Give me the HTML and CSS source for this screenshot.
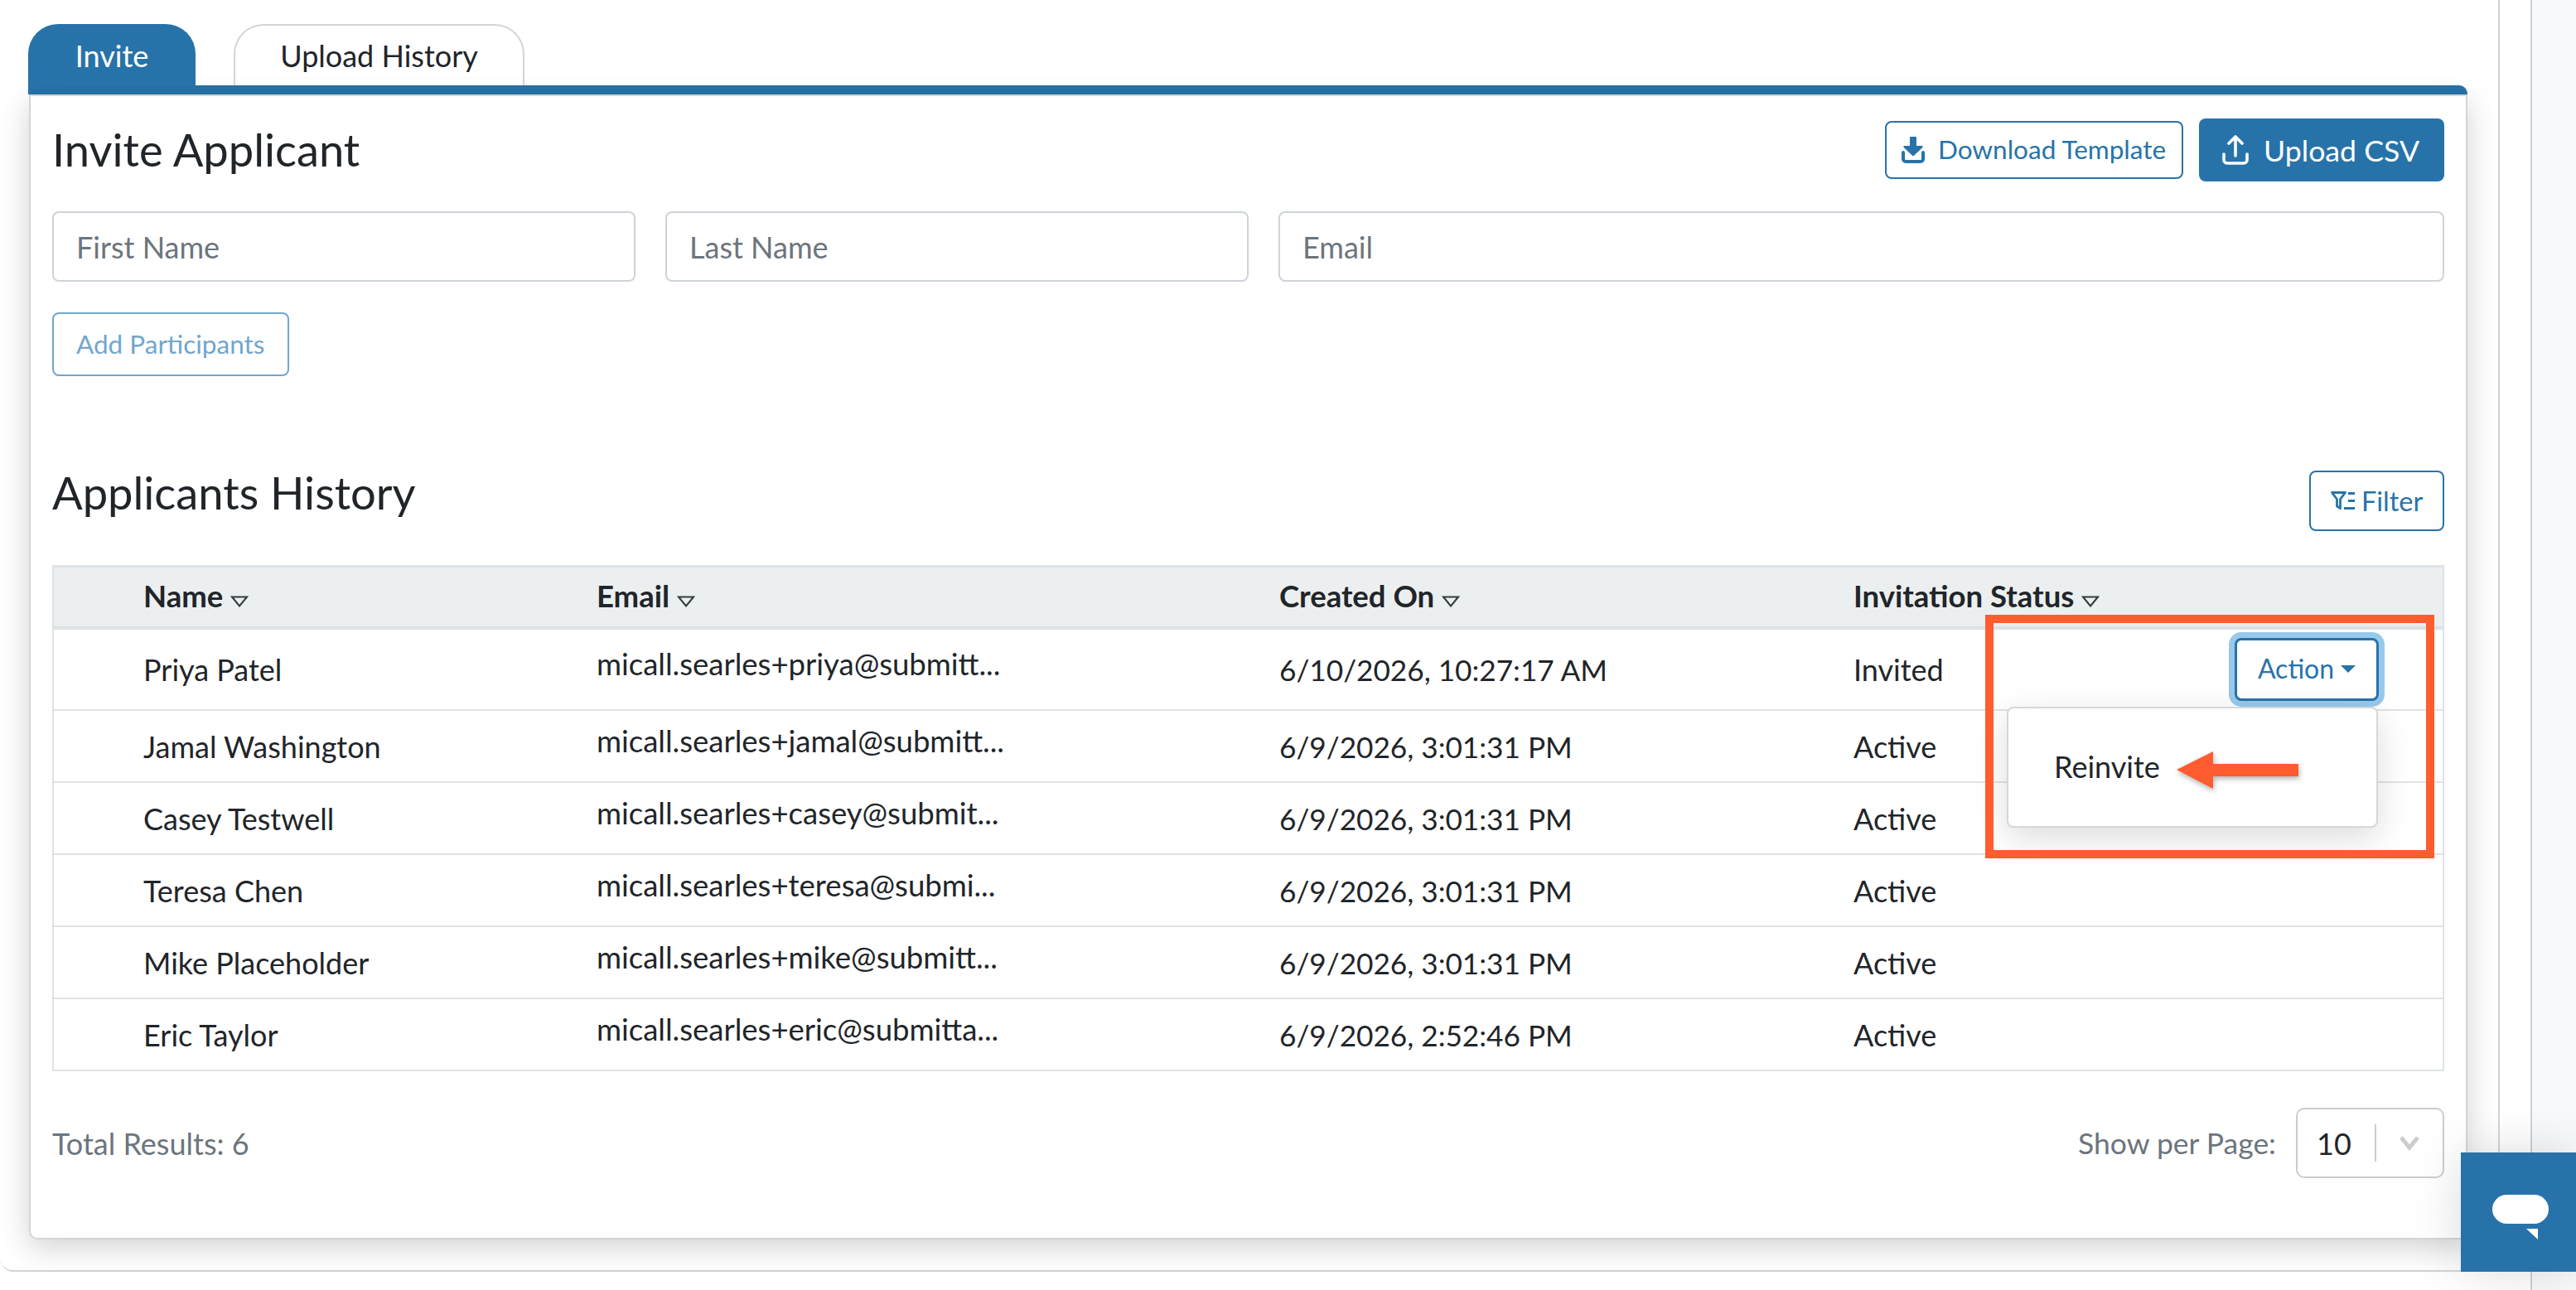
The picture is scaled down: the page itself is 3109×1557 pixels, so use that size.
FILE: index.html
```html
<!DOCTYPE html>
<html lang="en">
<head>
    <meta charset="UTF-8">
    <meta name="viewport" content="width=device-width, initial-scale=1.0">
    <title>Invite Applicant</title>
    <link rel="stylesheet" href="styles.css">
</head>
<body>
    <div class="page">
        <main class="panel">
            <!-- Tabs -->
            <nav class="tabs">
                <a class="tab tab-active" href="#">Invite</a>
                <a class="tab" href="#">Upload History</a>
            </nav>
            <div class="tab-bar"></div>

            <section class="card">
                <div class="card-head">
                    <h1>Invite Applicant</h1>
                    <div class="head-actions">
                        <button class="btn btn-outline btn-download">
                            <svg class="icon-download" viewBox="0 0 28 32"><path d="M11 0h6a1 1 0 0 1 1 1v10h6.500c1 0 1.500 1.200.8 1.900L14.800 23a1 1 0 0 1-1.500 0L2.700 12.900c-.7-.7-.2-1.900.8-1.900H10V1a1 1 0 0 1 1-1z" fill="currentColor"/><path d="M2 19v8a3 3 0 0 0 3 3h18a3 3 0 0 0 3-3v-8" fill="none" stroke="currentColor" stroke-width="4" stroke-linecap="round"/></svg>
                            <span class="btn-label">Download Template</span>
                        </button>
                        <button class="btn btn-solid">
                            <svg class="icon-upload" viewBox="0 0 32 36"><path d="M16 25V3M8 10l8-8 8 8" fill="none" stroke="currentColor" stroke-width="3.600" stroke-linecap="round" stroke-linejoin="round"/><path d="M2 23v7a4 4 0 0 0 4 4h20a4 4 0 0 0 4-4v-7" fill="none" stroke="currentColor" stroke-width="3.600" stroke-linecap="round"/></svg>
                            Upload CSV
                        </button>
                    </div>
                </div>

                <form class="invite-form">
                    <input class="field field-name" type="text" placeholder="First Name">
                    <input class="field field-name" type="text" placeholder="Last Name">
                    <input class="field field-email" type="text" placeholder="Email">
                </form>
                <button class="btn btn-add">Add Participants</button>

                <div class="history-head">
                    <h2>Applicants History</h2>
                    <button class="btn btn-outline btn-filter">
                        <svg class="icon-filter" viewBox="0 0 30 23"><path d="M1.500 1.500h16l-6 8v11l-4-2.500v-8.500z" fill="none" stroke="currentColor" stroke-width="2.800" stroke-linejoin="round"/><path d="M21 2.500h8M21 11.500h8M16 20.500h13" fill="none" stroke="currentColor" stroke-width="3"/></svg>
                        Filter
                    </button>
                </div>

                <table class="applicants">
                    <thead>
                        <tr>
                            <th class="col-pad"></th>
                            <th class="col-name">Name <svg class="sort" viewBox="0 0 22 14"><path d="M2 1.500h18l-9 11z" fill="none" stroke="currentColor" stroke-width="2"/></svg></th>
                            <th class="col-email">Email <svg class="sort" viewBox="0 0 22 14"><path d="M2 1.500h18l-9 11z" fill="none" stroke="currentColor" stroke-width="2"/></svg></th>
                            <th class="col-date">Created On <svg class="sort" viewBox="0 0 22 14"><path d="M2 1.500h18l-9 11z" fill="none" stroke="currentColor" stroke-width="2"/></svg></th>
                            <th>Invitation Status <svg class="sort" viewBox="0 0 22 14"><path d="M2 1.500h18l-9 11z" fill="none" stroke="currentColor" stroke-width="2"/></svg></th>
                        </tr>
                    </thead>
                    <tbody>
                        <tr class="row-first">
                            <td></td>
                            <td>Priya Patel</td>
                            <td><span class="email">micall.searles+priya@submitt...</span></td>
                            <td class="date">6/10/2026, 10:27:17 AM</td>
                            <td class="status-cell">
                                Invited
                                <button class="btn-action">Action<span class="caret"></span></button>
                                <div class="menu"><span class="menu-item">Reinvite</span></div>
                            </td>
                        </tr>
                        <tr>
                            <td></td>
                            <td>Jamal Washington</td>
                            <td><span class="email">micall.searles+jamal@submitt...</span></td>
                            <td class="date">6/9/2026, 3:01:31 PM</td>
                            <td>Active</td>
                        </tr>
                        <tr>
                            <td></td>
                            <td>Casey Testwell</td>
                            <td><span class="email">micall.searles+casey@submit...</span></td>
                            <td class="date">6/9/2026, 3:01:31 PM</td>
                            <td>Active</td>
                        </tr>
                        <tr>
                            <td></td>
                            <td>Teresa Chen</td>
                            <td><span class="email">micall.searles+teresa@submi...</span></td>
                            <td class="date">6/9/2026, 3:01:31 PM</td>
                            <td>Active</td>
                        </tr>
                        <tr>
                            <td></td>
                            <td>Mike Placeholder</td>
                            <td><span class="email">micall.searles+mike@submitt...</span></td>
                            <td class="date">6/9/2026, 3:01:31 PM</td>
                            <td>Active</td>
                        </tr>
                        <tr>
                            <td></td>
                            <td>Eric Taylor</td>
                            <td><span class="email">micall.searles+eric@submitta...</span></td>
                            <td class="date">6/9/2026, 2:52:46 PM</td>
                            <td>Active</td>
                        </tr>
                    </tbody>
                </table>

                <div class="table-foot">
                    <span class="muted">Total Results: 6</span>
                    <div class="per-page">
                        <span class="muted per-label">Show per Page:</span>
                        <div class="select">
                            <span class="select-value">10</span>
                            <span class="select-arrow">
                                <svg class="chevron" viewBox="0 0 26 20"><path d="M3 3l10 12L23 3" fill="none" stroke="currentColor" stroke-width="5"/></svg>
                            </span>
                        </div>
                    </div>
                </div>
            </section>
        </main>
        <div class="gutter"></div>
        <aside class="side"></aside>
    </div>

    <!-- Screenshot annotation -->
    <div class="callout"></div>
    <svg class="callout-arrow" viewBox="0 0 147 45"><path d="M0 22L44 0v15h103v15H44v15z" fill="#ff5c30"/></svg>

    <!-- Chat launcher -->
    <div class="chat">
        <span class="chat-bubble"></span>
        <svg class="chat-tail" viewBox="0 0 14 13"><path d="M0 0h14v13z" fill="#fff"/></svg>
    </div>
</body>
</html>
```

FILE: styles.css
```css
* {
    box-sizing: border-box;
}

html, body {
    height: 100%;
}

body {
    margin: 0;
    overflow: hidden;
    position: relative;
    font-family: Lato, "Liberation Sans", sans-serif;
    font-size: 36px;
    color: #212529;
    background-color: #fff;
}

.page {
    display: flex;
    height: 100%;
    align-items: flex-start;
}

.panel {
    flex: 0 0 3017px;
    height: 1535px;
    border-right: 2px solid #d2d4d6;
    border-bottom: 2px solid #d2d4d6;
    border-bottom-left-radius: 16px;
    padding-top: 29px;
    background-color: #fff;
}

.gutter {
    flex: 0 0 37px;
}

.side {
    flex: 1;
    height: 100%;
    border-left: 2px solid #cfd2d5;
    background-color: #f8f9fb;
}

/* Tabs */
.tabs {
    display: flex;
    gap: 46px;
    margin-left: 34px;
    height: 74px;
}

.tab {
    display: flex;
    align-items: center;
    justify-content: center;
    font-size: 36px;
    color: #212529;
    text-decoration: none;
    border: 2px solid #d5d5d5;
    border-bottom: none;
    border-radius: 36px 36px 0 0;
    width: 351px;
}

.tab-active {
    width: 202px;
    color: #fff;
    border-color: #2773a9;
    background-color: #2773a9;
}

.tab-bar {
    width: 2944px;
    height: 11px;
    margin-left: 34px;
    background-color: #2773a9;
    border-top-right-radius: 10px;
}

/* Card */
.card {
    width: 2943px;
    height: 1382px;
    margin-left: 35px;
    padding: 27px 26px 0;
    background-color: #fff;
    border: 2px solid #d5d5d5;
    border-top-width: 2px;
    border-radius: 0 0 10px 10px;
    box-shadow: 0 10px 36px rgba(0, 0, 0, 0.18);
}

.card-head, .history-head, .table-foot {
    display: flex;
    align-items: center;
    justify-content: space-between;
}

.card-head {
    height: 76px;
}

h1, h2 {
    margin: 0;
    font-size: 54.300px;
    font-weight: 400;
    line-height: 1.2;
}

h2 {
    padding-bottom: 20px;
}

.head-actions {
    display: flex;
    align-items: center;
    gap: 19px;
}

.btn {
    display: flex;
    align-items: center;
    font-family: inherit;
    border-radius: 8px;
    background-color: #fff;
    cursor: pointer;
}

.btn-outline {
    color: #2773a9;
    border: 2px solid #2773a9;
}

.btn-download {
    width: 360px;
    height: 70px;
    padding: 0 0 0 18px;
    gap: 16px;
    font-size: 31.500px;
}

.btn-label {
    padding-bottom: 3px;
}

.btn-solid {
    width: 296px;
    height: 76px;
    padding: 0 0 0 28px;
    gap: 18px;
    font-size: 35.700px;
    color: #fff;
    border: none;
    background-color: #2773a9;
}

.icon-download {
    width: 28px;
    height: 32px;
}

.icon-upload {
    width: 32px;
    height: 36px;
}

/* Invite form */
.invite-form {
    display: flex;
    gap: 36px;
    margin-top: 36px;
}

.field {
    height: 85px;
    padding: 0 27px;
    font-family: inherit;
    font-size: 36px;
    border: 2px solid #ced4da;
    border-radius: 8px;
    background-color: #fff;
}

.field::placeholder {
    color: #6c757d;
    opacity: 1;
}

.field-name {
    flex: 0 0 704px;
}

.field-email {
    flex: 1;
}

.btn-add {
    width: 286px;
    height: 77px;
    margin-top: 37px;
    padding: 0 0 2px 27px;
    font-size: 31.500px;
    color: #72a6cd;
    border: 2px solid #72a6cd;
}

/* History */
.history-head {
    height: 73px;
    margin-top: 114px;
}

.btn-filter {
    width: 163px;
    height: 73px;
    padding: 0 0 0 24px;
    gap: 7px;
    font-size: 32.500px;
}

.icon-filter {
    width: 30px;
    height: 23px;
}

.applicants {
    width: 100%;
    margin-top: 41px;
    table-layout: fixed;
    border-collapse: separate;
    border-spacing: 0;
    border-left: 2px solid #dee2e6;
    border-right: 2px solid #dee2e6;
}

.applicants th {
    height: 78px;
    padding: 0 0 3px;
    font-size: 36.500px;
    font-weight: 700;
    text-align: left;
    background-color: #eceff0;
    border-top: 3px solid #dee2e6;
    border-bottom: 4px solid #dee2e6;
}

.applicants td {
    height: 87px;
    padding: 0;
    border-bottom: 2px solid #dee2e6;
}

.applicants .row-first td {
    height: 98px;
}

.col-pad {
    width: 108px;
}

.col-name {
    width: 547px;
}

.col-email {
    width: 824px;
}

.col-date {
    width: 693px;
}

.sort {
    width: 22px;
    height: 14px;
    color: #343a40;
}

.email {
    display: block;
    padding-bottom: 14px;
    font-size: 36.500px;
}

.applicants .date {
    font-size: 35.200px;
}

/* Action menu */
.status-cell {
    position: relative;
}

.btn-action {
    position: absolute;
    top: 10px;
    right: 77px;
    width: 174px;
    height: 76px;
    padding: 0 0 4px;
    font-family: inherit;
    font-size: 32px;
    color: #2773a9;
    background-color: #fff;
    border: 3px solid #2773a9;
    border-radius: 8px;
    box-shadow: 0 0 0 7px #98c9ec;
}

.caret {
    display: inline-block;
    margin: -5px 0 0 8px;
    vertical-align: middle;
    border-top: 9px solid #2773a9;
    border-left: 9px solid transparent;
    border-right: 9px solid transparent;
}

.menu {
    position: absolute;
    top: 93px;
    right: 78px;
    z-index: 2;
    width: 448px;
    height: 146px;
    padding: 0 0 0 55px;
    display: flex;
    align-items: center;
    background-color: #fff;
    border: 2px solid #d5d7d9;
    border-radius: 8px;
    box-shadow: 0 12px 40px rgba(0, 0, 0, 0.14);
}

.menu-item {
    padding-bottom: 2px;
}

/* Footer of the table */
.table-foot {
    height: 85px;
    margin-top: 44px;
}

.muted {
    color: #6c757d;
}

.per-label {
    font-size: 35.500px;
}

.per-page {
    display: flex;
    align-items: center;
    gap: 24px;
}

.select {
    display: flex;
    align-items: center;
    width: 179px;
    height: 85px;
    border: 2px solid #ccc;
    border-radius: 10px;
}

.select-value {
    width: 93px;
    padding-left: 23px;
}

.select-arrow {
    display: flex;
    align-items: center;
    justify-content: center;
    width: 82px;
    height: 45px;
    border-left: 2px solid #ccc;
    color: #ccc;
}

.chevron {
    width: 26px;
    height: 20px;
}

/* Annotation over the screenshot */
.callout {
    position: absolute;
    left: 2396px;
    top: 742px;
    z-index: 3;
    width: 542px;
    height: 294px;
    border: 10px solid #ff5c30;
}

.callout-arrow {
    position: absolute;
    left: 2627px;
    top: 907px;
    z-index: 3;
    width: 147px;
    height: 45px;
    filter: drop-shadow(1px 3px 3px rgba(0, 0, 0, 0.3));
}

/* Chat launcher */
.chat {
    position: absolute;
    left: 2970px;
    top: 1391px;
    z-index: 4;
    width: 139px;
    height: 144px;
    background-color: #2773a9;
    box-shadow: 0 0 60px rgba(0, 0, 0, 0.14);
}

.chat-bubble {
    position: absolute;
    left: 38px;
    top: 51px;
    width: 68px;
    height: 35px;
    background-color: #fff;
    border-radius: 18px / 18px;
}

.chat-tail {
    position: absolute;
    left: 79px;
    top: 92px;
    width: 14px;
    height: 13px;
}
```
